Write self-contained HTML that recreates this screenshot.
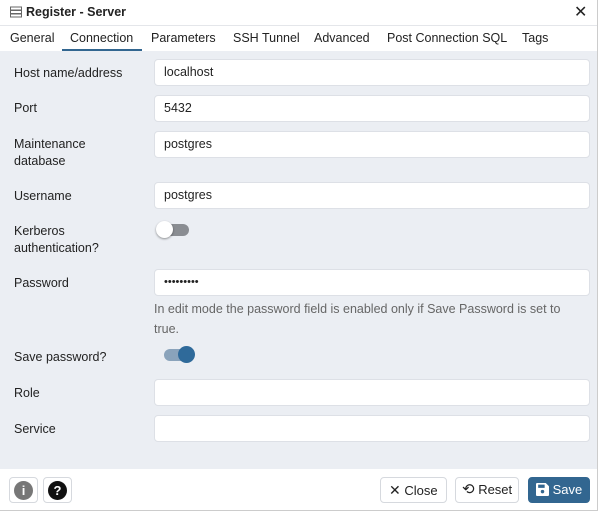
<!DOCTYPE html>
<html><head><style>
body{margin:0;width:601px;height:515px;overflow:hidden;font-family:"Liberation Sans",sans-serif;background:#fff;position:relative;color:#222}
.a{position:absolute}
.lbl{position:absolute;left:14px;font-size:12.5px;color:#222;line-height:17px}
.inp{position:absolute;left:154px;height:25px;background:#fff;border:1px solid #dde0e6;border-radius:4px;font-size:12.5px;line-height:25px;padding-left:9px;box-sizing:content-box;width:425px}
.tab{position:absolute;top:31px;font-size:12.5px;color:#222}
.btn{position:absolute;top:477px;border:1px solid #d6d9de;border-radius:4px;background:#fff;font-size:12.5px;line-height:24px;box-sizing:border-box;height:26px}
</style></head><body>
<div class="a" style="left:0;top:0;width:597px;height:510px;border-right:1px solid #ccc;border-bottom:1px solid #ccc"></div>
<svg class="a" style="left:10px;top:6px" width="12" height="12" viewBox="0 0 12 12"><rect x="0.5" y="1" width="11" height="3" fill="none" stroke="#666"/><rect x="0.5" y="4.5" width="11" height="3" fill="none" stroke="#666"/><rect x="0.5" y="8" width="11" height="3" fill="none" stroke="#666"/></svg>
<div class="a" style="left:26px;top:5px;font-size:12.5px;font-weight:bold">Register - Server</div>
<div class="a" style="left:574px;top:2px;font-size:16px">✕</div>
<div class="a" style="left:0;top:25px;width:597px;height:1px;background:#e4e6ea"></div>
<div class="tab" style="left:10px">General</div>
<div class="tab" style="left:70px">Connection</div>
<div class="a" style="left:62px;top:49px;width:80px;height:2px;background:#326690"></div>
<div class="tab" style="left:151px">Parameters</div>
<div class="tab" style="left:233px">SSH Tunnel</div>
<div class="tab" style="left:314px">Advanced</div>
<div class="tab" style="left:387px">Post Connection SQL</div>
<div class="tab" style="left:522px">Tags</div>
<div class="a" style="left:0;top:51px;width:597px;height:418px;background:#ebeef3"></div>
<div class="lbl" style="top:65px">Host name/address</div>
<div class="inp" style="top:59px">localhost</div>
<div class="lbl" style="top:100px">Port</div>
<div class="inp" style="top:95px">5432</div>
<div class="lbl" style="top:136px">Maintenance<br>database</div>
<div class="inp" style="top:131px">postgres</div>
<div class="lbl" style="top:188px">Username</div>
<div class="inp" style="top:182px">postgres</div>
<div class="lbl" style="top:223px">Kerberos<br>authentication?</div>
<div class="a" style="left:159px;top:224px;width:30px;height:12px;border-radius:6px;background:#8a8d92"></div>
<div class="a" style="left:156px;top:221px;width:17px;height:17px;border-radius:50%;background:#fff;box-shadow:0 1px 2px rgba(0,0,0,.4)"></div>
<div class="lbl" style="top:275px">Password</div>
<div class="inp" style="top:269px;font-size:11px">•••••••••</div>
<div class="a" style="left:154px;top:299px;font-size:12.5px;color:#666;line-height:20px;width:430px">In edit mode the password field is enabled only if Save Password is set to true.</div>
<div class="lbl" style="top:349px">Save password?</div>
<div class="a" style="left:164px;top:349px;width:30px;height:12px;border-radius:6px;background:#8aa3bb"></div>
<div class="a" style="left:178px;top:346px;width:17px;height:17px;border-radius:50%;background:#2f6a9a"></div>
<div class="lbl" style="top:385px">Role</div>
<div class="inp" style="top:379px"></div>
<div class="lbl" style="top:421px">Service</div>
<div class="inp" style="top:415px"></div>
<div class="btn" style="left:9px;width:29px"><div class="a" style="left:4px;top:3px;width:19px;height:19px;border-radius:50%;background:#777;color:#fff;font-size:13px;line-height:19px;text-align:center;font-weight:bold">i</div></div>
<div class="btn" style="left:43px;width:29px"><div class="a" style="left:4px;top:3px;width:19px;height:19px;border-radius:50%;background:#111;color:#fff;font-size:13px;line-height:19px;text-align:center;font-weight:bold">?</div></div>
<div class="btn" style="left:380px;width:67px;padding-left:8px;font-size:13px"><span style="font-size:14px">✕</span> Close</div>
<div class="btn" style="left:455px;width:64px;padding-left:6px;font-size:13px"><span style="font-size:15px">⟲</span> Reset</div>
<div class="btn" style="left:528px;width:62px;background:#326690;border-color:#326690;color:#fff;padding-left:7px;font-size:13px"><svg width="13" height="13" viewBox="0 0 12 12" style="vertical-align:-2px"><path d="M0 1a1 1 0 011-1h8l3 3v8a1 1 0 01-1 1H1a1 1 0 01-1-1z" fill="#fff"/><rect x="2" y="1.5" width="6" height="3" fill="#326690"/><circle cx="6" cy="8" r="1.6" fill="#326690"/></svg> Save</div>
</body></html>
